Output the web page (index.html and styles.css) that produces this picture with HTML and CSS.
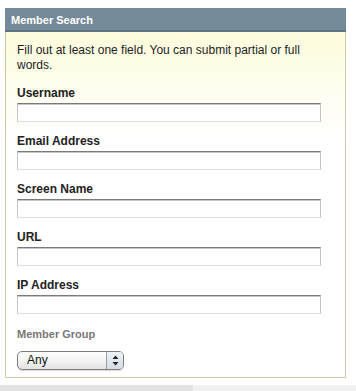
FILE: index.html
```html
<!DOCTYPE html>
<html>
<head>
<meta charset="utf-8">
<link rel="stylesheet" href="styles.css">
</head>
<body>
<div class="box">
  <div class="head">Member Search</div>
  <div class="panel">
    <p class="intro">Fill out at least one field. You can submit partial or full words.</p>
    <div class="field"><label>Username</label><input type="text"></div>
    <div class="field"><label>Email Address</label><input type="text"></div>
    <div class="field"><label>Screen Name</label><input type="text"></div>
    <div class="field"><label>URL</label><input type="text"></div>
    <div class="field"><label>IP Address</label><input type="text"></div>
    <div class="group-label">Member Group</div>
    <div class="select">
      <span class="sel-text">Any</span>
      <span class="sel-arrows">
        <svg width="7" height="11" viewBox="0 0 7 11"><path d="M3.5 0.5 L6.5 4 L0.5 4 Z M3.5 10.5 L6.5 7 L0.5 7 Z" fill="#222"/></svg>
      </span>
    </div>
  </div>
</div>
<div class="footer"><div class="footer-left"></div></div>
</body>
</html>
```

FILE: styles.css
```css
html, body {
  margin: 0;
  padding: 0;
  background: #fff;
  font-family: "Liberation Sans", Arial, sans-serif;
}
.box {
  margin: 8px 0 0 5px;
  width: 341px;
}
.head {
  height: 22px;
  background: #758a99;
  border-bottom: 2px solid #5f7483;
  color: #fff;
  font-weight: bold;
  font-size: 11px;
  line-height: 25px;
  padding-left: 6px;
}
.panel {
  border: 1px solid #cfcaa3;
  border-top: none;
  background: linear-gradient(to bottom, #fdfcdc 0px, #fefef0 60px, #ffffff 110px);
  padding: 11px 0 0 11px;
  height: 334px;
}
.intro {
  margin: 0;
  font-size: 12px;
  line-height: 15px;
  color: #222;
  width: 310px;
}
.field {
  display: flex;
  flex-direction: column;
  margin-top: 13px;
}
.field + .field {
  margin-top: 12px;
}
.field label {
  font-weight: bold;
  font-size: 12px;
  line-height: 15px;
  color: #222;
  margin-bottom: 2px;
}
.field input {
  box-sizing: border-box;
  width: 304px;
  height: 19px;
  margin: 0;
  padding: 0 3px;
  border: 1px solid #c4c4c4;
  border-top-color: #7a7a7a;
  border-bottom-color: #dedede;
  box-shadow: inset 0 1px 0 #c8c8c8;
  background: #fff;
}
.group-label {
  margin-top: 13px;
  font-weight: bold;
  font-size: 11px;
  line-height: 14px;
  color: #777;
}
.select {
  margin-top: 10px;
  box-sizing: border-box;
  width: 107px;
  height: 19px;
  border: 1px solid #7d7d7d;
  border-radius: 5px;
  display: flex;
  background: linear-gradient(to bottom, #ffffff 0%, #f4f4f4 50%, #e2e2e2 100%);
  box-shadow: 0 1px 1px rgba(0,0,0,0.15);
  overflow: hidden;
}
.sel-text {
  flex: 1;
  font-size: 12px;
  line-height: 17px;
  padding-left: 9px;
  color: #111;
}
.sel-arrows {
  width: 16px;
  border-left: 1px solid #9a9a9a;
  display: flex;
  align-items: center;
  justify-content: center;
  background: linear-gradient(to bottom, #eef2f7 0%, #d6dde6 100%);
}
.footer {
  margin-top: 7px;
  height: 6px;
  background: #f0f0f0;
}
.footer-left {
  width: 193px;
  height: 6px;
  background: #e3e3e3;
}
```
